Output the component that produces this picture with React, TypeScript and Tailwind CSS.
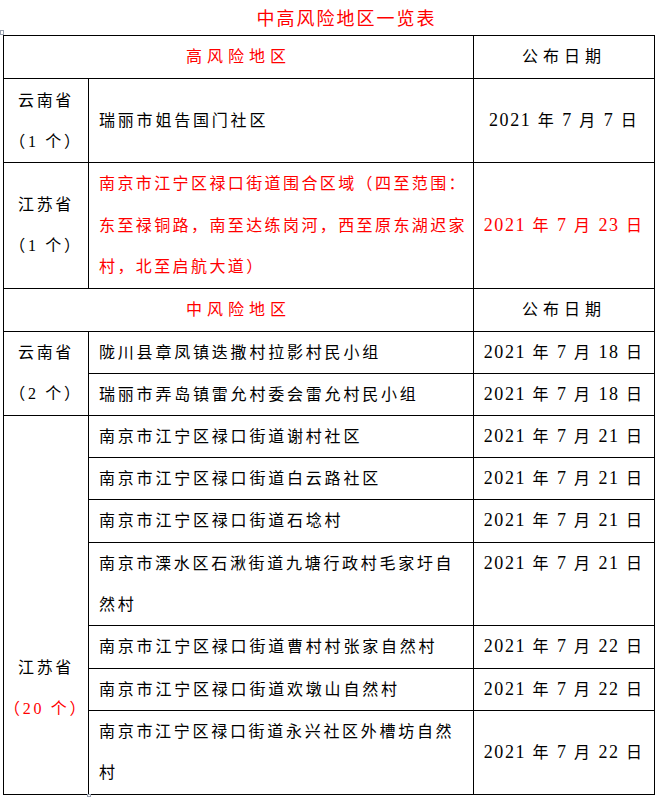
import React from "react";

type Row = {
  place: string;
  date: string;
  h: number;
  lines?: string[];
  dateTop?: boolean;
};

const FONT = { fontFamily: '"Liberation Serif", "Noto Sans CJK SC", serif' };

// 中风险 - 云南省
const yunnanMid: Row[] = [
  { place: "陇川县章凤镇迭撒村拉影村民小组", date: "2021 年 7 月 18 日", h: 42 },
  { place: "瑞丽市弄岛镇雷允村委会雷允村民小组", date: "2021 年 7 月 18 日", h: 42 },
];

// 中风险 - 江苏省
const jiangsuMid: Row[] = [
  { place: "南京市江宁区禄口街道谢村社区", date: "2021 年 7 月 21 日", h: 42 },
  { place: "南京市江宁区禄口街道白云路社区", date: "2021 年 7 月 21 日", h: 42 },
  { place: "南京市江宁区禄口街道石埝村", date: "2021 年 7 月 21 日", h: 43 },
  {
    place: "",
    lines: ["南京市溧水区石湫街道九塘行政村毛家圩自", "然村"],
    date: "2021 年 7 月 21 日",
    h: 83,
    dateTop: true,
  },
  { place: "南京市江宁区禄口街道曹村村张家自然村", date: "2021 年 7 月 22 日", h: 43 },
  { place: "南京市江宁区禄口街道欢墩山自然村", date: "2021 年 7 月 22 日", h: 42 },
  {
    place: "",
    lines: ["南京市江宁区禄口街道永兴社区外槽坊自然", "村"],
    date: "2021 年 7 月 22 日",
    h: 84,
  },
];

const cell = "border border-black p-0";

// the digits in the dates are set a bit larger than the chinese glyphs
function DateText({ date }: { date: string }) {
  return (
    <>
      {date.split(/(\d+)/).map((part, i) =>
        /\d/.test(part) ? (
          <span key={i} className="text-[18px] tracking-[1.6px]">
            {part}
          </span>
        ) : (
          <span key={i}>{part}</span>
        )
      )}
    </>
  );
}

function PlaceCell({ row }: { row: Row }) {
  return (
    <td className={`${cell} pl-[10px] text-black align-middle`}>
      {row.lines ? (
        <div className="leading-[41px] whitespace-nowrap tracking-[2.7px]">
          {row.lines.map((l) => (
            <div key={l}>{l}</div>
          ))}
        </div>
      ) : (
        <div className="leading-[41px] whitespace-nowrap tracking-[2.8px]">{row.place}</div>
      )}
    </td>
  );
}

function DateCell({ date, red, top }: { date: string; red?: boolean; top?: boolean }) {
  return (
    <td
      className={`${cell} text-center tracking-[2.3px] ${red ? "text-[#ff0000]" : "text-black"} ${
        top ? "align-top" : "align-middle"
      }`}
    >
      <div className="leading-[41px] whitespace-nowrap">
        <DateText date={date} />
      </div>
    </td>
  );
}

function HeaderRow({ title }: { title: string }) {
  return (
    <tr className="h-[43px]">
      <td colSpan={2} className={`${cell} text-center text-[#ff0000] tracking-[5px]`}>
        {title}
      </td>
      <td className={`${cell} text-center text-black tracking-[5px]`}>公布日期</td>
    </tr>
  );
}

export default function App() {
  return (
    <div className="relative w-[657px] h-[797px] bg-white text-[16px]" style={FONT}>
      {/* title */}
      <div className="h-[35px] flex items-center justify-center pl-[36px] pt-[2px]">
        <span className="text-[18px] text-[#ff0000] tracking-[2px] leading-none">中高风险地区一览表</span>
      </div>

      <table className="ml-[3px] w-[651px] table-fixed border-collapse">
        <colgroup>
          <col className="w-[85px]" />
          <col className="w-[385px]" />
          <col className="w-[181px]" />
        </colgroup>
        <tbody>
          <HeaderRow title="高风险地区" />

          <tr className="h-[84px]">
            <td className={`${cell} text-center text-black tracking-[2.7px]`}>
              <div className="leading-[41px]">云南省</div>
              <div className="leading-[41px]">（1 个）</div>
            </td>
            <td className={`${cell} pl-[10px] text-black`}>
              <div className="leading-[41px] tracking-[2.8px]">瑞丽市姐告国门社区</div>
            </td>
            <DateCell date="2021 年 7 月 7 日" />
          </tr>

          <tr className="h-[125px]">
            <td className={`${cell} text-center text-black tracking-[2.7px]`}>
              <div className="leading-[41px]">江苏省</div>
              <div className="leading-[41px]">（1 个）</div>
            </td>
            <td className={`${cell} pl-[10px] text-[#ff0000]`}>
              <div className="leading-[41.5px] whitespace-nowrap tracking-[2.4px]">
                <div>南京市江宁区禄口街道围合区域（四至范围：</div>
                <div>东至禄铜路，南至达练岗河，西至原东湖迟家</div>
                <div>村，北至启航大道）</div>
              </div>
            </td>
            <DateCell date="2021 年 7 月 23 日" red />
          </tr>

          <HeaderRow title="中风险地区" />

          {yunnanMid.map((r, i) => (
            <tr key={r.place} style={{ height: r.h }}>
              {i === 0 && (
                <td rowSpan={yunnanMid.length} className={`${cell} text-center text-black tracking-[2.7px]`}>
                  <div className="leading-[41px]">云南省</div>
                  <div className="leading-[41px]">（2 个）</div>
                </td>
              )}
              <PlaceCell row={r} />
              <DateCell date={r.date} />
            </tr>
          ))}

          {jiangsuMid.map((r, i) => (
            <tr key={r.place || r.lines?.[0]} style={{ height: r.h }}>
              {i === 0 && (
                <td
                  rowSpan={jiangsuMid.length}
                  className={`${cell} text-center align-top pt-[231px] tracking-[2.7px]`}
                >
                  <div className="leading-[41px] text-black">江苏省</div>
                  <div className="leading-[41px] text-[#ff0000]">（20 个）</div>
                </td>
              )}
              <PlaceCell row={r} />
              <DateCell date={r.date} top={r.dateTop} />
            </tr>
          ))}
        </tbody>
      </table>

      {/* word table handles */}
      <div className="absolute left-0 top-[30px] w-[4px] h-[5px] border border-gray-400" />
      <div className="absolute left-[87px] top-[794px] w-[4px] h-[3px] border border-gray-400" />
    </div>
  );
}
